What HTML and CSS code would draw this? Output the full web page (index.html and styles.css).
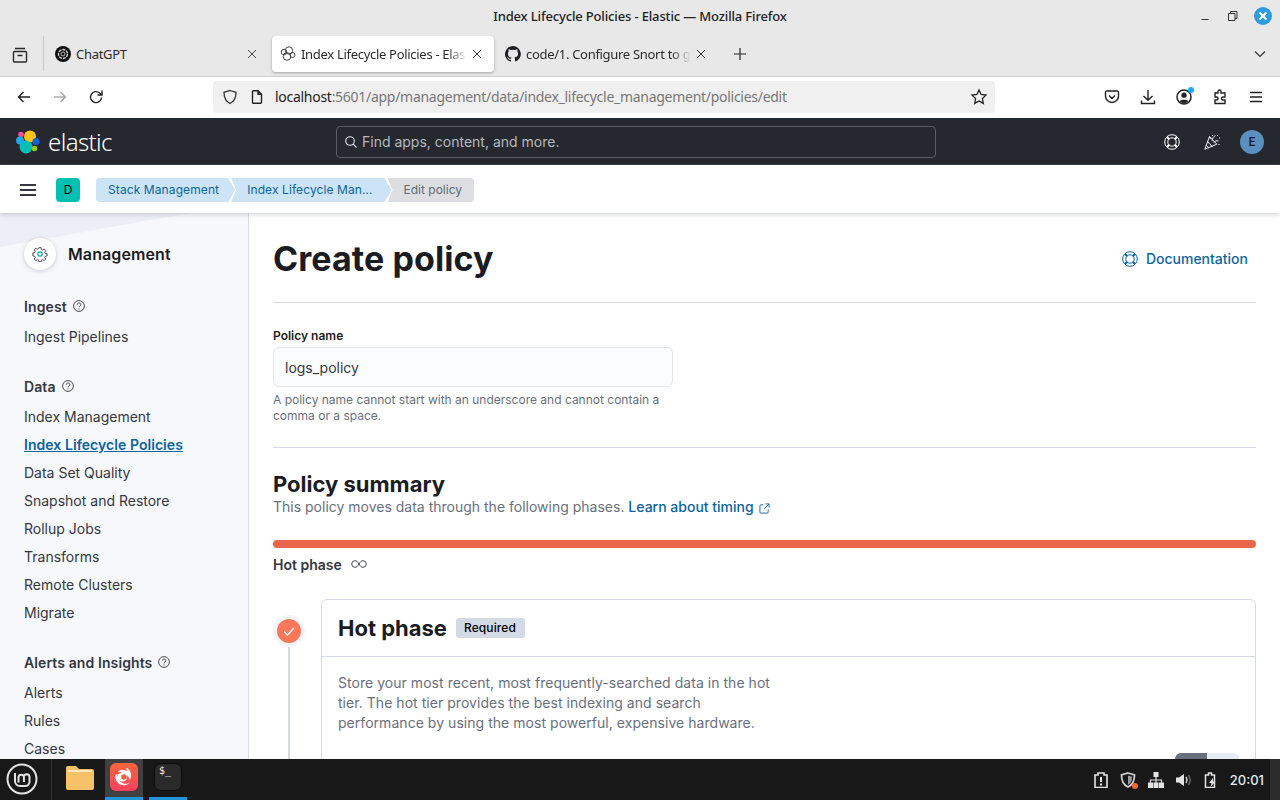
FILE: index.html
```html
<!DOCTYPE html>
<html lang="en">
<head>
  <meta charset="UTF-8">
  <title>Index Lifecycle Policies - Elastic</title>
  <link rel="stylesheet" href="styles.css">
</head>
<body>

  <div class="titlebar">
    <span class="titlebar-text">Index Lifecycle Policies - Elastic — Mozilla Firefox</span>
    <div class="win-buttons">
      <svg width="12" height="12" viewBox="0 0 12 12"><path d="M1.500 9.500h7" stroke="#333" fill="none"/></svg>
      <svg width="12" height="12" viewBox="0 0 12 12"><path d="M1.500 3.500h6.500v7h-6.500zM3.500 3.500v-2h6.500v7h-2" stroke="#333" fill="none"/></svg>
      <span class="win-close">
        <svg width="10" height="10" viewBox="0 0 10 10"><path d="M1.500 1.500l7 7M8.500 1.500l-7 7" stroke="#fff" stroke-width="2" fill="none"/></svg>
      </span>
    </div>
  </div>

  <div class="tabbar">
    <div class="tab-views">
      <svg width="18" height="18" viewBox="0 0 18 18" fill="none" stroke="#2b2b2b" stroke-width="1.400"><path d="M4 2.500h10M2.500 6.500a1 1 0 0 1 1-1h11a1 1 0 0 1 1 1v8.500a1 1 0 0 1-1 1h-11a1 1 0 0 1-1-1zM6.500 9.500h5"/></svg>
    </div>
    <div class="tab">
      <svg class="tab-icon" width="16" height="16" viewBox="0 0 16 16"><circle cx="8" cy="8" r="8" fill="#111"/><circle cx="8" cy="8" r="4.500" fill="none" stroke="#ddd" stroke-width="1.300" stroke-dasharray="3 1"/><circle cx="8" cy="8" r="2" fill="none" stroke="#bbb"/></svg>
      <span class="tab-label tab-plain">ChatGPT</span>
      <svg class="tab-close" width="10" height="10" viewBox="0 0 10 10"><path d="M1 1l8 8M9 1l-8 8" stroke="#444" fill="none"/></svg>
    </div>
    <div class="tab tab-active">
      <svg class="tab-icon" width="16" height="16" viewBox="0 0 16 16" fill="none" stroke="#444"><circle cx="9" cy="4.500" r="3.700"/><circle cx="4" cy="6" r="2.800"/><circle cx="7" cy="10.500" r="3.800"/><circle cx="12.500" cy="9" r="2.500"/></svg>
      <span class="tab-label">Index Lifecycle Policies - Elas</span>
      <svg class="tab-close" width="10" height="10" viewBox="0 0 10 10"><path d="M1 1l8 8M9 1l-8 8" stroke="#333" fill="none"/></svg>
    </div>
    <div class="tab tab-gh">
      <svg class="tab-icon" width="16" height="16" viewBox="0 0 16 16"><path fill="#1b1f23" d="M8 0a8 8 0 0 0-2.500 15.600c.4.1.5-.2.5-.4v-1.400c-2.200.5-2.700-1-2.700-1-.4-.9-.9-1.200-.9-1.200-.7-.5.100-.5.100-.5.800.1 1.200.8 1.200.8.700 1.200 1.900.9 2.300.7.100-.5.300-.9.500-1.100-1.800-.2-3.600-.9-3.600-4 0-.9.300-1.600.8-2.100-.1-.2-.4-1 .1-2.100 0 0 .7-.2 2.200.8a7.600 7.600 0 0 1 4 0c1.500-1 2.200-.8 2.200-.8.400 1.100.2 1.900.1 2.100.5.600.8 1.300.8 2.100 0 3.100-1.900 3.700-3.700 3.900.3.300.6.700.6 1.500v2.200c0 .2.100.5.600.4A8 8 0 0 0 8 0z"/></svg>
      <span class="tab-label">code/1. Configure Snort to g</span>
      <svg class="tab-close" width="10" height="10" viewBox="0 0 10 10"><path d="M1 1l8 8M9 1l-8 8" stroke="#333" fill="none"/></svg>
    </div>
    <svg class="tab-new" width="14" height="14" viewBox="0 0 14 14"><path d="M7 1v12M1 7h12" stroke="#222" stroke-width="1.200" fill="none"/></svg>
    <svg class="tab-list" width="14" height="14" viewBox="0 0 14 14"><path d="M2 4.500l5 5 5-5" stroke="#333" stroke-width="1.200" fill="none"/></svg>
  </div>

  <div class="navbar">
    <div class="nav-buttons">
      <svg width="16" height="16" viewBox="0 0 16 16" fill="none" stroke="#222" stroke-width="1.400"><path d="M14 8H2.500M7.500 3l-5 5 5 5"/></svg>
      <svg width="16" height="16" viewBox="0 0 16 16" fill="none" stroke="#aaa" stroke-width="1.400"><path d="M2 8h11.500M8.500 3l5 5-5 5"/></svg>
      <svg width="16" height="16" viewBox="0 0 16 16" fill="none" stroke="#222" stroke-width="1.400"><path d="M13.500 8.500a5.500 5.500 0 1 1-1.700-4.400L14 6M14 1.500V6H9.500"/></svg>
    </div>
    <div class="urlbar">
      <svg width="16" height="16" viewBox="0 0 16 16" fill="none" stroke="#333" stroke-width="1.300"><path d="M8 1.500l6 1.800c0 5.500-1.800 9.300-6 11.200-4.200-1.900-6-5.700-6-11.200z"/></svg>
      <svg class="url-page" width="14" height="16" viewBox="0 0 14 16" fill="none" stroke="#222" stroke-width="1.400"><path d="M2.500 2.700a1 1 0 0 1 1-1h4.500l3.500 3.500v8a1 1 0 0 1-1 1h-7a1 1 0 0 1-1-1zM8 1.700v3.500h3.500"/></svg>
      <span class="url-text"><span class="url-host">localhost</span>:5601/app/management/data/index_lifecycle_management/policies/edit</span>
      <svg width="18" height="18" viewBox="0 0 18 18" fill="none" stroke="#222" stroke-width="1.300"><path d="M9 2l2.100 4.500 4.900.6-3.600 3.400.9 4.900L9 13l-4.300 2.400.9-4.900L2 7.100l4.900-.6z"/></svg>
    </div>
    <div class="nav-tools">
      <svg width="16" height="16" viewBox="0 0 16 16" fill="none" stroke="#222" stroke-width="1.400"><path d="M2.800 2h10.400a1.300 1.300 0 0 1 1.300 1.300V7a6.500 6.500 0 0 1-13 0V3.300A1.300 1.300 0 0 1 2.800 2zM5 6.500l3 3 3-3"/></svg>
      <svg width="16" height="16" viewBox="0 0 16 16" fill="none" stroke="#222" stroke-width="1.400"><path d="M8 1v10M3.500 7L8 11.300 12.500 7M1.500 11.500v3h13v-3"/></svg>
      <span class="account">
        <svg width="16" height="16" viewBox="0 0 16 16"><circle cx="8" cy="8" r="7" fill="none" stroke="#222" stroke-width="1.500"/><circle cx="8" cy="6.200" r="2.600" fill="#222"/><path d="M3.500 12.500c1-2.500 8-2.500 9 0L8 14.500z" fill="#222"/></svg>
        <span class="account-dot"></span>
      </span>
      <svg width="16" height="16" viewBox="0 0 16 16" fill="none" stroke="#222" stroke-width="1.400"><path d="M6 2.500a1.500 1.500 0 0 1 3 0V4h4v4h-2a1.500 1.500 0 0 0 0 3h2v3.500H3V11h1.500a1.500 1.500 0 0 0 0-3H3V4h3z"/></svg>
      <svg width="16" height="16" viewBox="0 0 16 16" fill="none" stroke="#222" stroke-width="1.400"><path d="M2 3.500h12M2 8h12M2 12.500h12"/></svg>
    </div>
  </div>

  <header class="kbn-header">
    <div class="kbn-logo">
      <svg width="24" height="24" viewBox="0 0 24 24">
        <circle cx="14" cy="6.500" r="6" fill="#fec514"/>
        <circle cx="5" cy="4.500" r="2.800" fill="#f04e98"/>
        <circle cx="4" cy="10.500" r="3.900" fill="#1ba9f5"/>
        <circle cx="20" cy="11.500" r="3.500" fill="#0b64dd"/>
        <circle cx="10" cy="17" r="6.500" fill="#00bfb3"/>
        <circle cx="18.500" cy="18.500" r="2.800" fill="#93c90e"/>
      </svg>
      <span class="kbn-wordmark">elastic</span>
    </div>
    <div class="kbn-search">
      <svg width="14" height="14" viewBox="0 0 14 14" fill="none" stroke="#dfe5ef" stroke-width="1.100"><circle cx="6" cy="6" r="4.300"/><path d="M9.200 9.200l3.300 3.300"/></svg>
      <span>Find apps, content, and more.</span>
    </div>
    <div class="kbn-tools">
      <svg width="16" height="16" viewBox="0 0 16 16" fill="none" stroke="#fff"><circle cx="8" cy="8" r="7.300"/><circle cx="8" cy="8" r="4.200"/><path d="M3 3l2.200 2.200M13 3l-2.200 2.200M3 13l2.200-2.200M13 13l-2.200-2.200" stroke-width="2"/></svg>
      <svg width="16" height="16" viewBox="0 0 16 16" fill="none" stroke="#f0f2f6"><path d="M5.500 2.500L.8 15.200l12-5zM3.600 7.500l5 5.600M2.300 11.500l2.700 2.700M5.500 2.500l1 2.500M8 7c.5-2.500 1.500-4.500 3.500-5.500M9.500 8.500c1.500-1.500 3-2 5-1.500M13.500 1v1M15.500 3.500v1M15 10v1M8.500 1v1"/></svg>
      <span class="kbn-user">E</span>
    </div>
  </header>

  <div class="kbn-subheader">
    <svg width="16" height="16" viewBox="0 0 16 16" fill="none" stroke="#343741" stroke-width="2"><path d="M0 3h16M0 8h16M0 13h16"/></svg>
    <span class="space-badge">D</span>
    <nav class="crumbs">
      <a class="crumb crumb-first">Stack Management</a>
      <a class="crumb crumb-mid">Index Lifecycle Man…</a>
      <span class="crumb crumb-last">Edit policy</span>
    </nav>
  </div>

  <main class="app">
    <aside class="sidebar">
      <div class="side-head">
        <span class="side-icon">
          <svg width="16" height="16" viewBox="0 0 16 16" fill="none" stroke="#343741"><path d="M6.800 1h2.400l.4 2 1.300.6 1.800-1.100 1.700 1.700-1.100 1.800.6 1.300 2 .4v2.400l-2 .4-.6 1.300 1.100 1.800-1.700 1.700-1.800-1.100-1.300.6-.4 2H6.800l-.4-2-1.300-.6-1.800 1.100-1.700-1.700 1.100-1.800-.6-1.300-2-.4V6.800l2-.4.6-1.300-1.100-1.800 1.700-1.700 1.800 1.100 1.300-.6z" transform="translate(.8 .8) scale(.9)"/><circle cx="8" cy="8" r="2.200" stroke="#00a69b" stroke-width="1.200"/></svg>
        </span>
        <span class="side-title">Management</span>
      </div>

      <div class="side-group">
        <div class="side-label">Ingest
          <svg width="12" height="12" viewBox="0 0 12 12" fill="none" stroke="#343741" stroke-width=".9"><circle cx="6" cy="6" r="5.400"/><path d="M4.300 4.700c0-2.300 3.500-2.300 3.500 0 0 1.300-1.800 1.200-1.800 2.700M6 8.500v1"/></svg>
        </div>
        <a class="side-item">Ingest Pipelines</a>
      </div>

      <div class="side-group">
        <div class="side-label">Data
          <svg width="12" height="12" viewBox="0 0 12 12" fill="none" stroke="#343741" stroke-width=".9"><circle cx="6" cy="6" r="5.400"/><path d="M4.300 4.700c0-2.300 3.500-2.300 3.500 0 0 1.300-1.800 1.200-1.800 2.700M6 8.500v1"/></svg>
        </div>
        <a class="side-item">Index Management</a>
        <a class="side-item side-current">Index Lifecycle Policies</a>
        <a class="side-item">Data Set Quality</a>
        <a class="side-item">Snapshot and Restore</a>
        <a class="side-item">Rollup Jobs</a>
        <a class="side-item">Transforms</a>
        <a class="side-item">Remote Clusters</a>
        <a class="side-item">Migrate</a>
      </div>

      <div class="side-group">
        <div class="side-label">Alerts and Insights
          <svg width="12" height="12" viewBox="0 0 12 12" fill="none" stroke="#343741" stroke-width=".9"><circle cx="6" cy="6" r="5.400"/><path d="M4.300 4.700c0-2.300 3.500-2.300 3.500 0 0 1.300-1.800 1.200-1.800 2.700M6 8.500v1"/></svg>
        </div>
        <a class="side-item">Alerts</a>
        <a class="side-item">Rules</a>
        <a class="side-item">Cases</a>
      </div>
    </aside>

    <section class="content">
      <div class="page-head">
        <h1>Create policy</h1>
        <a class="doc-link">
          <svg width="16" height="16" viewBox="0 0 16 16" fill="none" stroke="#0b64a0"><circle cx="8" cy="8" r="7.300"/><circle cx="8" cy="8" r="4.200"/><path d="M3 3l2.200 2.200M13 3l-2.200 2.200M3 13l2.200-2.200M13 13l-2.200-2.200" stroke-width="2"/></svg>
          Documentation
        </a>
      </div>

      <div class="name-form">
        <label class="field-label">Policy name</label>
        <div class="field-input">logs_policy</div>
        <p class="field-help">A policy name cannot start with an underscore and cannot contain a comma or a space.</p>
      </div>

      <h2>Policy summary</h2>
      <p class="summary-text">This policy moves data through the following phases. <a class="ext-link">Learn about timing
        <svg width="11" height="11" viewBox="0 0 12 12" fill="none" stroke="#0b64a0"><path d="M5 2H2a1 1 0 0 0-1 1v7a1 1 0 0 0 1 1h7a1 1 0 0 0 1-1V7M7 1h4v4M11 1L5.500 6.500"/></svg></a></p>

      <div class="phase-bar"></div>
      <div class="phase-name">Hot phase
        <svg width="16" height="8" viewBox="0 0 16 8" fill="none" stroke="#343741" stroke-width=".9"><path d="M8 4C6.500 1.500 5.500.7 4 .7a3.300 3.300 0 0 0 0 6.600c1.500 0 2.500-.8 4-3.300s2.500-3.300 4-3.300a3.300 3.300 0 0 1 0 6.600c-1.500 0-2.500-.8-4-3.300z"/></svg>
      </div>

      <div class="timeline">
        <div class="step">
          <span class="step-halo">
            <span class="step-dot">
              <svg width="14" height="14" viewBox="0 0 14 14" fill="none" stroke="#fff" stroke-width="1.300"><path d="M2 7.500l3.500 3.500 6.500-7"/></svg>
            </span>
          </span>
          <span class="step-line"></span>
        </div>
        <div class="card">
          <div class="card-head">
            <h2 class="card-title">Hot phase</h2>
            <span class="badge">Required</span>
          </div>
          <div class="card-body">
            <p class="card-text">Store your most recent, most frequently-searched data in the hot tier. The hot tier provides the best indexing and search performance by using the most powerful, expensive hardware.</p>
            <div class="toggle"><span class="toggle-on"></span><span class="toggle-off"></span></div>
          </div>
        </div>
      </div>
    </section>
  </main>

  <footer class="taskbar">
    <span class="mint">
      <svg width="32" height="32" viewBox="0 0 32 32" fill="none" stroke="#e4e4e4"><circle cx="16" cy="16" r="14.500" stroke-width="2"/><path d="M9 10v8a5 5 0 0 0 5 5h5a4.500 4.500 0 0 0 4.500-4.500V14a2.800 2.800 0 0 0-5.600 0v5M18 14a2.800 2.800 0 0 0-5.500 0v5.500" stroke-width="2"/></svg>
    </span>
    <span class="task-sep"></span>
    <span class="task-app">
      <svg width="30" height="26" viewBox="0 0 30 26"><path d="M1 4a2 2 0 0 1 2-2h8l3 3h13a2 2 0 0 1 2 2v17a2 2 0 0 1-2 2H3a2 2 0 0 1-2-2z" fill="#f6c167"/><path d="M3 6h24v2H3z" fill="#fbe7c4"/></svg>
    </span>
    <span class="task-app task-on task-active">
      <span class="ff-icon">
        <svg width="28" height="28" viewBox="0 0 28 28"><path d="M17 4.500c1 1.500 1 2.500.5 3.500-3-2-7-1.500-8.500 1 1.500-.5 3-.5 4 .5-3 .5-5 2.500-4.500 5 .5 3 3.500 4.500 6 4 3-.5 4.500-3.500 3.500-6 2 1 2.500 3 2 5 1.500-1.500 2.500-4 2-6.500-.5-3-2.500-5.500-5-6.500z" fill="#fff" transform="translate(-1 0)"/><path d="M5.500 12a8.500 8.500 0 0 0 15 7c-2 2-6 2.500-9 .5-3-2-4.500-5-4-8.500z" fill="#fff"/><circle cx="14" cy="14" r="2.800" fill="#f9603d"/></svg>
      </span>
    </span>
    <span class="task-app task-on">
      <span class="term-icon">$_</span>
    </span>
    <div class="tray">
      <svg width="14" height="16" viewBox="0 0 14 16"><path d="M1 3h3V1h6v2h3v12.500H1z" fill="none" stroke="#e4e4e4" stroke-width="1.600"/><path d="M7 5v5M7 11.500v2" stroke="#e4e4e4" stroke-width="2"/></svg>
      <span class="tray-shield">
        <svg width="16" height="16" viewBox="0 0 16 16"><path d="M8 1l6.500 2c0 6-2 10-6.500 12C3.500 13 1.500 9 1.500 3z" fill="none" stroke="#ccc" stroke-width="1.800"/><path d="M8 3.500l4 1.200c0 4-1 6.500-4 8z" fill="#999"/></svg>
        <span class="shield-dot"></span>
      </span>
      <svg width="16" height="16" viewBox="0 0 16 16" fill="#e4e4e4"><path d="M5.500 0h5v5h-5zM0 10.500h5V16H0zM5.500 10.500h5V16h-5zM11 10.500h5V16h-5z"/><path d="M8 5v3M2.500 10.500V8h11v2.500M8 8v3" fill="none" stroke="#e4e4e4" stroke-width="1.200"/></svg>
      <svg width="16" height="16" viewBox="0 0 16 16"><path d="M0 5.500h3L8 2v12l-5-3.500H0z" fill="#e4e4e4"/><path d="M10 5c1.200 1.800 1.200 4.200 0 6" fill="none" stroke="#ccc" stroke-width="1.400"/><path d="M12.500 3c2 3 2 7 0 10" fill="none" stroke="#666" stroke-width="1.400"/></svg>
      <svg width="14" height="16" viewBox="0 0 14 16"><path d="M1.500 3h3V1h3v2h3v12.500h-9z" fill="none" stroke="#e4e4e4" stroke-width="1.500"/><path d="M9 6l-4 5h2.500l-1 4 5-5.500H9z" fill="#e4e4e4"/></svg>
      <span class="clock">20:01</span>
    </div>
    <span class="task-end"></span>
  </footer>

</body>
</html>
```

FILE: styles.css
```css
* {
  box-sizing: border-box;
}

html, body {
  height: 100%;
}

body {
  margin: 0;
  display: flex;
  flex-direction: column;
  height: 800px;
  overflow: hidden;
  font-family: Inter, "Noto Sans", sans-serif;
  background-color: #fff;
  color: #343741;
}

svg {
  display: block;
  flex: none;
}

/* firefox window */
.titlebar {
  height: 36px;
  flex: none;
  padding-bottom: 4px;
  display: flex;
  align-items: center;
  justify-content: center;
  background-color: #e8e8e8;
  font-family: "Noto Sans", sans-serif;
  position: relative;
}

.titlebar-text {
  font-size: 13px;
  color: #222;
  letter-spacing: -0.15px;
  font-weight: 500;
}

.win-buttons {
  position: absolute;
  right: 8px;
  top: 7px;
  display: flex;
  align-items: center;
  gap: 15px;
}

.win-close {
  width: 18px;
  height: 18px;
  border-radius: 50%;
  background-color: #2f9bdc;
  display: flex;
  align-items: center;
  justify-content: center;
}

.tabbar {
  height: 41px;
  flex: none;
  display: flex;
  align-items: flex-start;
  background-color: #e8e8e8;
  border-bottom: 1px solid #cfcfcf;
  font-family: "Noto Sans", sans-serif;
  font-size: 13px;
  color: #2b2b2b;
}

.tab-views {
  width: 44px;
  height: 39px;
  margin-top: -4px;
  padding: 14px 0 0 11px;
  border-right: 1px solid #c9c9c9;
}

.tab {
  width: 225px;
  height: 36px;
  margin-right: 3px;
  padding: 0 12px 0 11px;
  display: flex;
  align-items: center;
  gap: 5px;
  border-radius: 4px;
  letter-spacing: -0.3px;
}

.tab-active {
  width: 222px;
  margin-right: 3px;
  background-color: #fff;
  box-shadow: 0 1px 3px rgba(0, 0, 0, 0.3);
  padding: 0 12px 0 8px;
}

.tab-gh {
  width: 216px;
  padding: 0 7px 0 8px;
}

.tab-label {
  flex: 1;
  min-width: 0;
  white-space: nowrap;
  -webkit-mask-image: linear-gradient(to left, transparent 0, #000 20px);
  mask-image: linear-gradient(to left, transparent 0, #000 20px);
}

.tab-plain {
  -webkit-mask-image: none;
  mask-image: none;
}

.tab-new {
  margin: 11px 0 0 17px;
}

.tab-list {
  margin: 11px 13px 0 auto;
}

.navbar {
  height: 41px;
  flex: none;
  padding-bottom: 1px;
  display: flex;
  align-items: center;
  background-color: #fff;
  font-family: "Noto Sans", sans-serif;
}

.nav-buttons {
  width: 213px;
  padding-left: 16px;
  display: flex;
  gap: 20px;
}

.urlbar {
  width: 782px;
  height: 32px;
  padding: 0 7px 0 9px;
  display: flex;
  align-items: center;
  background-color: #f0f0f0;
  border-radius: 4px;
  font-size: 14px;
  letter-spacing: -0.28px;
  color: #777;
}

.url-page {
  margin-left: 12px;
}

.url-text {
  flex: 1;
  margin-left: 11px;
  padding-bottom: 2px;
  white-space: nowrap;
}

.url-host {
  color: #222;
}

.nav-tools {
  flex: 1;
  padding: 0 16px 0 109px;
  display: flex;
  justify-content: space-between;
  align-items: center;
}

.account {
  position: relative;
}

.account-dot {
  position: absolute;
  top: -2px;
  right: -2px;
  width: 6px;
  height: 6px;
  border-radius: 50%;
  background-color: #1ba9f5;
}

/* kibana chrome */
.kbn-header {
  height: 47px;
  flex: none;
  padding: 1px 0 0 16px;
  display: flex;
  align-items: center;
  background-color: #25282f;
  border-bottom: 1px solid #3a3d45;
}

.kbn-logo {
  width: 320px;
  display: flex;
  align-items: center;
  gap: 8px;
}

.kbn-wordmark {
  font-family: "Noto Sans", sans-serif;
  font-size: 24px;
  font-weight: 300;
  color: #fff;
  letter-spacing: -0.6px;
  line-height: 24px;
}

.kbn-search {
  width: 600px;
  height: 32px;
  padding-left: 7px;
  display: flex;
  align-items: center;
  gap: 4px;
  border: 1px solid #5a5d64;
  border-radius: 4px;
  font-size: 14px;
  color: #b4b8bf;
}

.kbn-tools {
  flex: 1;
  padding-right: 16px;
  display: flex;
  align-items: center;
  justify-content: flex-end;
  gap: 24px;
}

.kbn-user {
  width: 24px;
  height: 24px;
  margin-left: -4px;
  border-radius: 50%;
  background-color: #5b8fbf;
  color: #0b1628;
  font-size: 12px;
  font-weight: 500;
  text-align: center;
  line-height: 24px;
}

.kbn-subheader {
  height: 48px;
  flex: none;
  padding: 2px 0 0 20px;
  display: flex;
  align-items: center;
  background-color: #fff;
  position: relative;
  z-index: 1;
  box-shadow: 0 1px 5px rgba(52, 55, 65, 0.25);
}

.space-badge {
  width: 24px;
  height: 24px;
  margin: 0 16px 0 20px;
  border-radius: 4px;
  background-color: #00bfb3;
  color: #000;
  font-size: 12px;
  text-align: center;
  line-height: 24px;
}

.crumbs {
  display: flex;
  font-size: 12px;
  line-height: 24px;
}

.crumb {
  height: 24px;
  padding: 0 12px;
  background-color: #cce4f5;
  color: #0b64a0;
  white-space: nowrap;
  letter-spacing: 0.1px;
}

.crumb-first {
  padding-right: 16px;
  border-radius: 4px 0 0 4px;
  clip-path: polygon(0 0, calc(100% - 7px) 0, 100% 50%, calc(100% - 7px) 100%, 0 100%);
}

.crumb-mid {
  margin-left: -4px;
  padding: 0 19px 0 16px;
  clip-path: polygon(0 0, calc(100% - 7px) 0, 100% 50%, calc(100% - 7px) 100%, 0 100%, 5px 50%);
}

.crumb-last {
  margin-left: -4px;
  padding: 0 12px 0 16px;
  background-color: #dddee1;
  color: #646a77;
  letter-spacing: 0;
  border-radius: 0 4px 4px 0;
  clip-path: polygon(0 0, 100% 0, 100% 100%, 0 100%, 5px 50%);
}

/* app */
.app {
  flex: 1;
  min-height: 0;
  display: flex;
  overflow: hidden;
}

.sidebar {
  width: 249px;
  flex: none;
  padding: 25px 16px 0 24px;
  position: relative;
  background-color: #f7f8fc;
  border-right: 1px solid #d8dce6;
  font-size: 14px;
}

.sidebar::before {
  content: "";
  position: absolute;
  left: 0;
  top: 0;
  width: 190px;
  height: 34px;
  background-color: #eceff5;
  clip-path: polygon(0 0, 100% 0, 0 100%);
}

.side-head {
  position: relative;
  display: flex;
  align-items: center;
  gap: 12px;
  margin-bottom: 27px;
}

.side-icon {
  width: 32px;
  height: 32px;
  border-radius: 50%;
  background-color: #fff;
  box-shadow: 0 1px 4px rgba(52, 55, 65, 0.25);
  display: flex;
  align-items: center;
  justify-content: center;
}

.side-title {
  font-size: 16px;
  font-weight: 600;
  letter-spacing: 0.1px;
  color: #1a1c21;
}

.side-group {
  margin-bottom: 26px;
}

.side-label {
  height: 20px;
  margin-bottom: 6px;
  padding-bottom: 2px;
  display: flex;
  align-items: center;
  gap: 6px;
  font-weight: 600;
  letter-spacing: 0.1px;
  color: #343741;
}

.side-item {
  display: block;
  height: 28px;
  line-height: 28px;
  color: #343741;
  white-space: nowrap;
}

.side-current {
  color: #0b64a0;
  font-weight: 600;
  letter-spacing: 0.05px;
  text-decoration: underline;
}

.content {
  flex: 1;
  min-width: 0;
  padding: 25px 24px 0;
}

.page-head {
  height: 65px;
  display: flex;
  justify-content: space-between;
  align-items: flex-start;
  border-bottom: 1px solid #d3dae6;
}

h1 {
  margin: 0;
  font-size: 34px;
  line-height: 42px;
  font-weight: 700;
  letter-spacing: 0.08px;
  color: #1a1c21;
}

.doc-link {
  margin: 12px 8px 0 0;
  display: flex;
  align-items: center;
  gap: 8px;
  font-size: 14px;
  font-weight: 500;
  color: #0b64a0;
}

.name-form {
  height: 145px;
  padding-top: 24px;
  border-bottom: 1px solid #d3dae6;
}

.field-label {
  display: block;
  font-size: 12px;
  line-height: 18px;
  font-weight: 600;
  color: #1a1c21;
}

.field-input {
  width: 400px;
  height: 40px;
  margin-top: 2px;
  padding-left: 11px;
  line-height: 39px;
  font-size: 14px;
  color: #343741;
  background-color: #fbfcfd;
  border: 1px solid #e3e6ec;
  border-radius: 6px;
}

.field-help {
  width: 400px;
  margin: 5px 0 0;
  font-size: 12px;
  line-height: 16px;
  color: #69707d;
}

h2 {
  margin: 22px 0 0;
  font-size: 22px;
  line-height: 28px;
  font-weight: 700;
  color: #1a1c21;
}

.summary-text {
  margin: 0;
  font-size: 14px;
  line-height: 18px;
  color: #69707d;
}

.ext-link {
  color: #0b64a0;
  font-weight: 500;
}

.ext-link svg {
  display: inline-block;
  margin-left: 2px;
  vertical-align: -2px;
}

.phase-bar {
  height: 8px;
  margin-top: 24px;
  background-color: #e7664c;
  border-radius: 4px;
}

.phase-name {
  margin-top: 6px;
  height: 20px;
  display: flex;
  align-items: center;
  gap: 9px;
  font-size: 14px;
  font-weight: 600;
  color: #343741;
}

.timeline {
  margin-top: 25px;
  display: flex;
}

.step {
  width: 48px;
  flex: none;
  padding-top: 16px;
  display: flex;
  flex-direction: column;
  align-items: flex-start;
}

.step-halo {
  width: 32px;
  height: 32px;
  border-radius: 50%;
  background-color: #f3f5fa;
  display: flex;
  align-items: center;
  justify-content: center;
}

.step-dot {
  width: 24px;
  height: 24px;
  border-radius: 50%;
  background-color: #fc785a;
  display: flex;
  align-items: center;
  justify-content: center;
}

.step-line {
  width: 2px;
  flex: 1;
  margin-left: 15px;
  background-color: #d3dae6;
}

.card {
  flex: 1;
  min-width: 0;
  border: 1px solid #d3dae6;
  border-radius: 6px;
  background-color: #fff;
}

.card-head {
  height: 57px;
  padding-left: 16px;
  display: flex;
  align-items: center;
  gap: 9px;
  border-bottom: 1px solid #d3dae6;
}

.card-title {
  margin: 0;
  font-size: 22px;
  line-height: 32px;
}

.badge {
  height: 20px;
  padding: 0 9px 0 8px;
  border-radius: 3px;
  background-color: #d3dae6;
  color: #000;
  font-size: 12px;
  font-weight: 500;
  letter-spacing: 0.1px;
  line-height: 20px;
}

.card-body {
  padding: 16px 16px 40px;
  display: flex;
  justify-content: space-between;
  align-items: flex-start;
}

.card-text {
  width: 440px;
  margin: 0;
  font-size: 14px;
  line-height: 20px;
  letter-spacing: 0.04px;
  color: #69707d;
}

.toggle {
  width: 64px;
  height: 32px;
  margin-top: 80px;
  display: flex;
  border-radius: 6px;
  overflow: hidden;
}

.toggle-on {
  width: 32px;
  background-color: #69707d;
}

.toggle-off {
  flex: 1;
  background-color: #e5ebf5;
}

/* linux mint panel */
.taskbar {
  height: 41px;
  flex: none;
  display: flex;
  align-items: center;
  background-color: #181818;
}

.mint {
  width: 52px;
  height: 100%;
  padding: 4px 0 0 6px;
  border-right: 1px solid #333;
}

.task-sep {
  width: 9px;
}

.task-app {
  width: 38px;
  height: 100%;
  margin-right: 6px;
  padding-bottom: 2px;
  display: flex;
  align-items: center;
  justify-content: center;
  border-bottom: 3px solid transparent;
}

.task-on {
  border-bottom-color: #2196d8;
}

.task-active {
  background-color: #404040;
}

.ff-icon {
  width: 28px;
  height: 28px;
  border-radius: 6px;
  background: linear-gradient(#f9663c, #f9415f);
}

.term-icon {
  width: 28px;
  height: 28px;
  padding: 2px 0 0 4px;
  border-radius: 7px;
  background-color: #2a2a2a;
  border: 1px solid #0c0c0c;
  color: #eee;
  font-family: "DejaVu Sans Mono", monospace;
  font-size: 10px;
  line-height: 10px;
}

.tray {
  margin-left: auto;
  display: flex;
  align-items: center;
  gap: 12px;
  padding-right: 6px;
}

.tray-shield {
  position: relative;
}

.shield-dot {
  position: absolute;
  right: -2px;
  bottom: -1px;
  width: 6px;
  height: 6px;
  border-radius: 50%;
  background-color: #f96a2a;
}

.clock {
  font-size: 13px;
  font-weight: 500;
  color: #dfe9f5;
}

.task-end {
  width: 10px;
  height: 100%;
  background-color: #2c2c2c;
}
```
